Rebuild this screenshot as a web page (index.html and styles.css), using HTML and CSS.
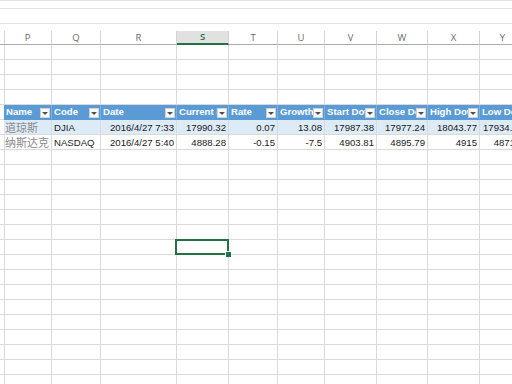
FILE: index.html
```html
<!DOCTYPE html>
<html>
<head>
<meta charset="utf-8">
<link rel="stylesheet" href="styles.css">
</head>
<body>
<div class="top">
  <div class="band b1"></div>
  <div class="band b2"></div>
  <div class="band b3"></div>
</div>
<div class="sheet">
  <div class="c h"></div><div class="c h">P</div><div class="c h">Q</div><div class="c h">R</div><div class="c h on">S</div><div class="c h">T</div><div class="c h">U</div><div class="c h">V</div><div class="c h">W</div><div class="c h">X</div><div class="c h">Y</div>

  <div class="c"></div><div class="c"></div><div class="c"></div><div class="c"></div><div class="c"></div><div class="c"></div><div class="c"></div><div class="c"></div><div class="c"></div><div class="c"></div><div class="c"></div>
  <div class="c"></div><div class="c"></div><div class="c"></div><div class="c"></div><div class="c"></div><div class="c"></div><div class="c"></div><div class="c"></div><div class="c"></div><div class="c"></div><div class="c"></div>
  <div class="c"></div><div class="c"></div><div class="c"></div><div class="c"></div><div class="c"></div><div class="c"></div><div class="c"></div><div class="c"></div><div class="c"></div><div class="c"></div><div class="c"></div>
  <div class="c"></div><div class="c"></div><div class="c"></div><div class="c"></div><div class="c"></div><div class="c"></div><div class="c"></div><div class="c"></div><div class="c"></div><div class="c"></div><div class="c"></div>

  <div class="c"></div>
  <div class="c th"><span class="t">Name</span><span class="dd"></span></div>
  <div class="c th"><span class="t">Code</span><span class="dd"></span></div>
  <div class="c th"><span class="t">Date</span><span class="dd"></span></div>
  <div class="c th"><span class="t">Current Index</span><span class="dd"></span></div>
  <div class="c th"><span class="t">Rate</span><span class="dd"></span></div>
  <div class="c th"><span class="t">Growth</span><span class="dd"></span></div>
  <div class="c th"><span class="t">Start Dow</span><span class="dd"></span></div>
  <div class="c th"><span class="t">Close Dow</span><span class="dd"></span></div>
  <div class="c th"><span class="t">High Dow</span><span class="dd"></span></div>
  <div class="c th"><span class="t">Low Dow</span><span class="dd"></span></div>

  <div class="c"></div>
  <div class="c band1 zh">道琼斯</div>
  <div class="c band1">DJIA</div>
  <div class="c band1 n">2016/4/27 7:33</div>
  <div class="c band1 n">17990.32</div>
  <div class="c band1 n">0.07</div>
  <div class="c band1 n">13.08</div>
  <div class="c band1 n">17987.38</div>
  <div class="c band1 n">17977.24</div>
  <div class="c band1 n">18043.77</div>
  <div class="c band1 n">17934.68</div>

  <div class="c"></div>
  <div class="c zh">纳斯达克</div>
  <div class="c">NASDAQ</div>
  <div class="c n">2016/4/27 5:40</div>
  <div class="c n">4888.28</div>
  <div class="c n">-0.15</div>
  <div class="c n">-7.5</div>
  <div class="c n">4903.81</div>
  <div class="c n">4895.79</div>
  <div class="c n">4915</div>
  <div class="c n">4871.9</div>

  <div class="c"></div><div class="c"></div><div class="c"></div><div class="c"></div><div class="c"></div><div class="c"></div><div class="c"></div><div class="c"></div><div class="c"></div><div class="c"></div><div class="c"></div>
  <div class="c"></div><div class="c"></div><div class="c"></div><div class="c"></div><div class="c"></div><div class="c"></div><div class="c"></div><div class="c"></div><div class="c"></div><div class="c"></div><div class="c"></div>
  <div class="c"></div><div class="c"></div><div class="c"></div><div class="c"></div><div class="c"></div><div class="c"></div><div class="c"></div><div class="c"></div><div class="c"></div><div class="c"></div><div class="c"></div>
  <div class="c"></div><div class="c"></div><div class="c"></div><div class="c"></div><div class="c"></div><div class="c"></div><div class="c"></div><div class="c"></div><div class="c"></div><div class="c"></div><div class="c"></div>
  <div class="c"></div><div class="c"></div><div class="c"></div><div class="c"></div><div class="c"></div><div class="c"></div><div class="c"></div><div class="c"></div><div class="c"></div><div class="c"></div><div class="c"></div>
  <div class="c"></div><div class="c"></div><div class="c"></div><div class="c"></div><div class="c"></div><div class="c"></div><div class="c"></div><div class="c"></div><div class="c"></div><div class="c"></div><div class="c"></div>

  <div class="c"></div><div class="c"></div><div class="c"></div><div class="c"></div><div class="c cur"><span class="sel"></span><span class="handle"></span></div><div class="c"></div><div class="c"></div><div class="c"></div><div class="c"></div><div class="c"></div><div class="c"></div>

  <div class="c"></div><div class="c"></div><div class="c"></div><div class="c"></div><div class="c"></div><div class="c"></div><div class="c"></div><div class="c"></div><div class="c"></div><div class="c"></div><div class="c"></div>
  <div class="c"></div><div class="c"></div><div class="c"></div><div class="c"></div><div class="c"></div><div class="c"></div><div class="c"></div><div class="c"></div><div class="c"></div><div class="c"></div><div class="c"></div>
  <div class="c"></div><div class="c"></div><div class="c"></div><div class="c"></div><div class="c"></div><div class="c"></div><div class="c"></div><div class="c"></div><div class="c"></div><div class="c"></div><div class="c"></div>
  <div class="c"></div><div class="c"></div><div class="c"></div><div class="c"></div><div class="c"></div><div class="c"></div><div class="c"></div><div class="c"></div><div class="c"></div><div class="c"></div><div class="c"></div>
  <div class="c"></div><div class="c"></div><div class="c"></div><div class="c"></div><div class="c"></div><div class="c"></div><div class="c"></div><div class="c"></div><div class="c"></div><div class="c"></div><div class="c"></div>
  <div class="c"></div><div class="c"></div><div class="c"></div><div class="c"></div><div class="c"></div><div class="c"></div><div class="c"></div><div class="c"></div><div class="c"></div><div class="c"></div><div class="c"></div>
  <div class="c"></div><div class="c"></div><div class="c"></div><div class="c"></div><div class="c"></div><div class="c"></div><div class="c"></div><div class="c"></div><div class="c"></div><div class="c"></div><div class="c"></div>
  <div class="c"></div><div class="c"></div><div class="c"></div><div class="c"></div><div class="c"></div><div class="c"></div><div class="c"></div><div class="c"></div><div class="c"></div><div class="c"></div><div class="c"></div>
  <div class="c"></div><div class="c"></div><div class="c"></div><div class="c"></div><div class="c"></div><div class="c"></div><div class="c"></div><div class="c"></div><div class="c"></div><div class="c"></div><div class="c"></div>
</div>
</body>
</html>
```

FILE: styles.css
```css
html, body {
  margin: 0;
  padding: 0;
  background: #ffffff;
}
body {
  width: 512px;
  height: 384px;
  overflow: hidden;
}
.band {
  box-sizing: border-box;
  border-top: 1px solid #e2e2e2;
}
.b1 { height: 8px; }
.b2 { height: 15px; }
.b3 { height: 8px; }

.sheet {
  display: grid;
  grid-template-columns: 4px 48px 49px 76px 52px 49px 47px 52px 51px 52px 46px;
  grid-template-rows: 14px;
  grid-auto-rows: 15px;
  width: 526px;
  font-family: "Liberation Sans", Arial, sans-serif;
  font-size: 9.6px;
  color: #1a1a1a;
}
.c {
  box-sizing: border-box;
  border-right: 1px solid #dadada;
  border-bottom: 1px solid #dadada;
  overflow: hidden;
  white-space: nowrap;
  line-height: 15px;
  padding: 0 2px;
  position: relative;
}
.h {
  font-family: "Open Sans", "Liberation Sans", sans-serif;
  font-size: 9.5px;
  color: #6a6a6a;
  text-align: center;
  line-height: 13px;
  border-bottom-color: #ababab;
  border-right-color: #d4d4d4;
}
.h.on {
  background: #e1e1e1;
  color: #217346;
  font-weight: 600;
  border-bottom: 2px solid #217346;
  line-height: 12px;
}
.th {
  background: #5b9bd5;
  color: #ffffff;
  font-weight: bold;
  display: flex;
  align-items: center;
  border-right-color: #7aaedd;
  border-bottom-color: #5b9bd5;
  padding: 0 1px 0 2px;
}
.t {
  flex: 1 1 auto;
  min-width: 0;
  overflow: hidden;
  line-height: 14px;
}
.dd {
  flex: none;
  width: 10px;
  height: 10px;
  margin-top: 2px;
  box-sizing: border-box;
  background: #fbfbfb;
  border: 1px solid #d0d0d0;
  display: flex;
  align-items: center;
  justify-content: center;
}
.dd::after {
  content: "";
  border-left: 3px solid transparent;
  border-right: 3px solid transparent;
  border-top: 3px solid #505050;
}
.band1 {
  background: #ddebf7;
}
.n {
  text-align: right;
}
.zh {
  font-family: "Noto Sans CJK SC", sans-serif;
  font-size: 11px;
  color: #8a8a8a;
  padding-left: 1px;
  line-height: 14px;
}
.cur {
  overflow: visible;
  z-index: 2;
}
.sel {
  position: absolute;
  top: -1px;
  left: -2px;
  right: -1px;
  bottom: -1px;
  border: 2px solid #217346;
}
.handle {
  position: absolute;
  right: -3px;
  bottom: -3px;
  width: 5px;
  height: 5px;
  box-sizing: border-box;
  width: 6px;
  height: 6px;
  background: #217346;
  border-left: 1px solid #ffffff;
  border-top: 1px solid #ffffff;
}
```
